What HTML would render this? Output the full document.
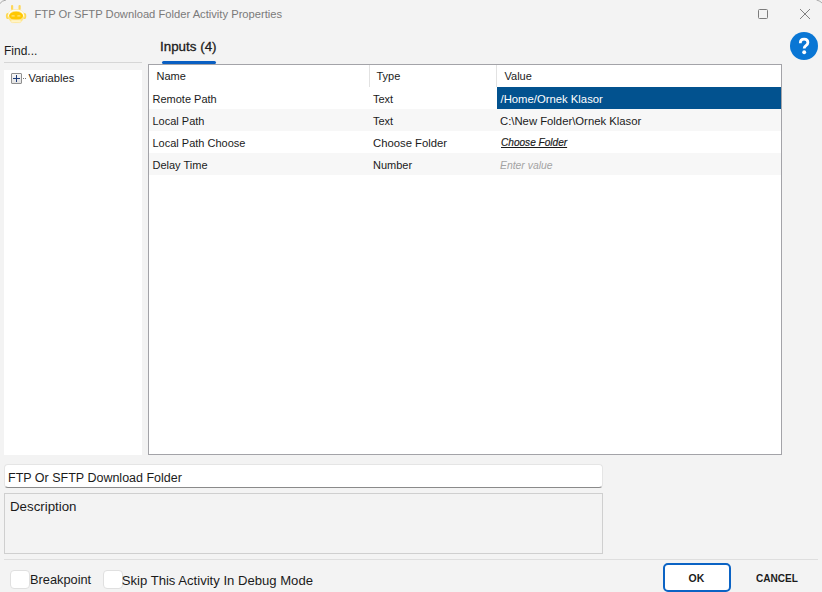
<!DOCTYPE html>
<html>
<head>
<meta charset="utf-8">
<style>
html,body{margin:0;padding:0;}
body{width:822px;height:592px;overflow:hidden;background:#f3f3f3;position:relative;font-family:"Liberation Sans",sans-serif;color:#1b1b1b;}
.a{position:absolute;white-space:pre;line-height:1;}
.box{position:absolute;box-sizing:border-box;}
</style>
</head>
<body>
<!-- window corners -->
<svg class="box" style="left:0;top:0" width="822" height="20">
  <path d="M0 3.5 Q1.5 0.8 6 0" stroke="#a8a8a8" stroke-width="1" fill="none"/>
  <path d="M816.5 0 Q820.5 1 822 3" stroke="#a8a8a8" stroke-width="1" fill="none"/>
</svg>

<!-- app icon -->
<svg class="box" style="left:0;top:0" width="30" height="26" viewBox="0 0 30 26">
  <rect x="11" y="5" width="2.2" height="5" rx="1.1" fill="#fdd75a"/>
  <rect x="18.5" y="5" width="2.2" height="5" rx="1.1" fill="#fdd75a"/>
  <ellipse cx="7.8" cy="16" rx="1.9" ry="3.1" fill="#fdd852"/>
  <ellipse cx="24.4" cy="16" rx="1.9" ry="3.1" fill="#fdd852"/>
  <ellipse cx="16.1" cy="15.8" rx="8.7" ry="6.9" fill="#fee585"/>
  <path d="M8.6 16.5 Q8.6 10.2 16.1 10.2 Q23.6 10.2 23.6 16.5" stroke="#fffcec" stroke-width="1.5" fill="none"/>
  <ellipse cx="16.1" cy="15.8" rx="7" ry="4.1" fill="#ffc800"/>
  <rect x="11.4" y="15.3" width="3.4" height="1.3" rx="0.65" fill="#ffe57a"/>
  <rect x="17.2" y="15.3" width="3.4" height="1.3" rx="0.65" fill="#ffe57a"/>
  <rect x="10.8" y="19.8" width="10.4" height="2.8" rx="1.4" fill="#fff4c8" stroke="#fde38f" stroke-width="0.6"/>
</svg>

<div class="a" style="left:34.5px;top:8.5px;font-size:11.2px;color:#7a7a7a;">FTP Or SFTP Download Folder Activity Properties</div>

<!-- window controls -->
<div class="box" style="left:758px;top:9px;width:10px;height:10px;border:1px solid #7c7c7c;border-radius:1.5px;"></div>
<svg class="box" style="left:799px;top:8px" width="12" height="12" viewBox="0 0 12 12">
  <path d="M1 1 L11 11 M11 1 L1 11" stroke="#7a7a7a" stroke-width="0.95" fill="none"/>
</svg>

<!-- help -->
<svg class="box" style="left:790px;top:32px" width="28" height="28" viewBox="0 0 28 28">
  <circle cx="14" cy="14" r="14" fill="#0976d4"/>
  <path d="M10.3 11.2 Q10.3 7.2 14.1 7.2 Q17.9 7.2 17.9 10.6 Q17.9 12.6 15.8 13.8 Q14.2 14.7 14.2 16.6" stroke="#fff" stroke-width="2.8" fill="none" stroke-linecap="butt"/>
  <circle cx="14.2" cy="20.2" r="1.95" fill="#fff"/>
</svg>

<!-- left panel -->
<div class="a" style="left:4px;top:44.5px;font-size:12px;">Find...</div>
<div class="box" style="left:4px;top:62px;width:138px;height:1px;background:#d6d6d6;"></div>
<div class="box" style="left:4px;top:70px;width:138px;height:385px;background:#ffffff;"></div>
<div class="box" style="left:11px;top:73px;width:11px;height:11px;border:1px solid #8f8f8f;border-radius:1px;background:linear-gradient(#f7f7f7,#e3e3e3);"></div>
<div class="box" style="left:13px;top:78px;width:7px;height:1px;background:#1f3d7a;"></div>
<div class="box" style="left:16px;top:75px;width:1px;height:7px;background:#1f3d7a;"></div>
<div class="box" style="left:23px;top:78px;width:1px;height:1px;background:#777;"></div>
<div class="box" style="left:25px;top:78px;width:1px;height:1px;background:#777;"></div>
<div class="a" style="left:28.5px;top:72.6px;font-size:11.2px;">Variables</div>

<!-- tab -->
<div class="a" style="left:160px;top:40px;font-size:13.4px;-webkit-text-stroke:0.3px #1b1b1b;">Inputs (4)</div>
<div class="box" style="left:162px;top:61px;width:54px;height:3px;background:#0a5fc2;border-radius:2px;"></div>

<!-- grid -->
<div class="box" style="left:148px;top:64px;width:634px;height:391px;border:1px solid #a3a3a8;background:#fff;"></div>
<div class="box" style="left:369px;top:65px;width:1px;height:22px;background:#e2e2e2;"></div>
<div class="box" style="left:496px;top:65px;width:1px;height:22px;background:#e2e2e2;"></div>
<div class="box" style="left:497px;top:87px;width:284px;height:22px;background:#02528f;"></div>
<div class="box" style="left:149px;top:109px;width:632px;height:22px;background:#f7f7f7;"></div>
<div class="box" style="left:149px;top:153px;width:632px;height:22px;background:#f7f7f7;"></div>

<div class="a" style="left:156.5px;top:70.5px;font-size:11px;">Name</div>
<div class="a" style="left:376.5px;top:70.5px;font-size:11px;">Type</div>
<div class="a" style="left:504.5px;top:70.5px;font-size:11px;">Value</div>

<div class="a" style="left:152.5px;top:94.3px;font-size:11px;">Remote Path</div>
<div class="a" style="left:373px;top:94.3px;font-size:11px;">Text</div>
<div class="a" style="left:500.5px;top:94.3px;font-size:11.3px;color:#fff;">/Home/Ornek Klasor</div>

<div class="a" style="left:152.5px;top:115.5px;font-size:11px;">Local Path</div>
<div class="a" style="left:373px;top:115.5px;font-size:11px;">Text</div>
<div class="a" style="left:500px;top:115.5px;font-size:11.3px;">C:\New Folder\Ornek Klasor</div>

<div class="a" style="left:152.5px;top:137.5px;font-size:11px;">Local Path Choose</div>
<div class="a" style="left:373px;top:137.5px;font-size:11.3px;">Choose Folder</div>
<div class="a" style="left:501px;top:136.8px;font-size:10.5px;font-style:italic;text-decoration:underline;transform:scaleX(0.96);transform-origin:0 0;-webkit-text-stroke:0.2px #1b1b1b;">Choose Folder</div>

<div class="a" style="left:152.5px;top:159.5px;font-size:11px;">Delay Time</div>
<div class="a" style="left:373px;top:159.5px;font-size:11px;">Number</div>
<div class="a" style="left:500px;top:160.5px;font-size:10.4px;font-style:italic;color:#a3a3a3;">Enter value</div>

<!-- name textbox -->
<div class="box" style="left:4px;top:464px;width:599px;height:24px;background:#fff;border:1px solid #e5e5e5;border-bottom:1px solid #8a8a8a;border-radius:4px;"></div>
<div class="a" style="left:8px;top:472px;font-size:12.5px;">FTP Or SFTP Download Folder</div>

<!-- description -->
<div class="box" style="left:4px;top:493px;width:599px;height:61px;border:1px solid #cfcfcf;background:#f3f3f3;"></div>
<div class="a" style="left:10px;top:499.5px;font-size:13.3px;">Description</div>

<!-- separator -->
<div class="box" style="left:4px;top:559px;width:814px;height:1px;background:#dedede;"></div>

<!-- checkboxes -->
<div class="box" style="left:10px;top:570px;width:20px;height:19px;border:1px solid #e0e0e0;border-radius:4px;background:#fff;"></div>
<div class="a" style="left:30px;top:574px;font-size:12.8px;">Breakpoint</div>
<div class="box" style="left:103px;top:570px;width:20px;height:19px;border:1px solid #e0e0e0;border-radius:4px;background:#fff;"></div>
<div class="a" style="left:121.8px;top:574px;font-size:13.1px;">Skip This Activity In Debug Mode</div>

<!-- buttons -->
<div class="box" style="left:663px;top:563px;width:68px;height:29px;border:2px solid #0b63c4;border-radius:5px;background:#fff;"></div>
<div class="a" style="left:688.5px;top:572.5px;font-size:10.5px;font-weight:bold;">OK</div>
<div class="a" style="left:756px;top:572.5px;font-size:10.5px;font-weight:bold;transform:scaleX(0.96);transform-origin:0 0;">CANCEL</div>

</body>
</html>
